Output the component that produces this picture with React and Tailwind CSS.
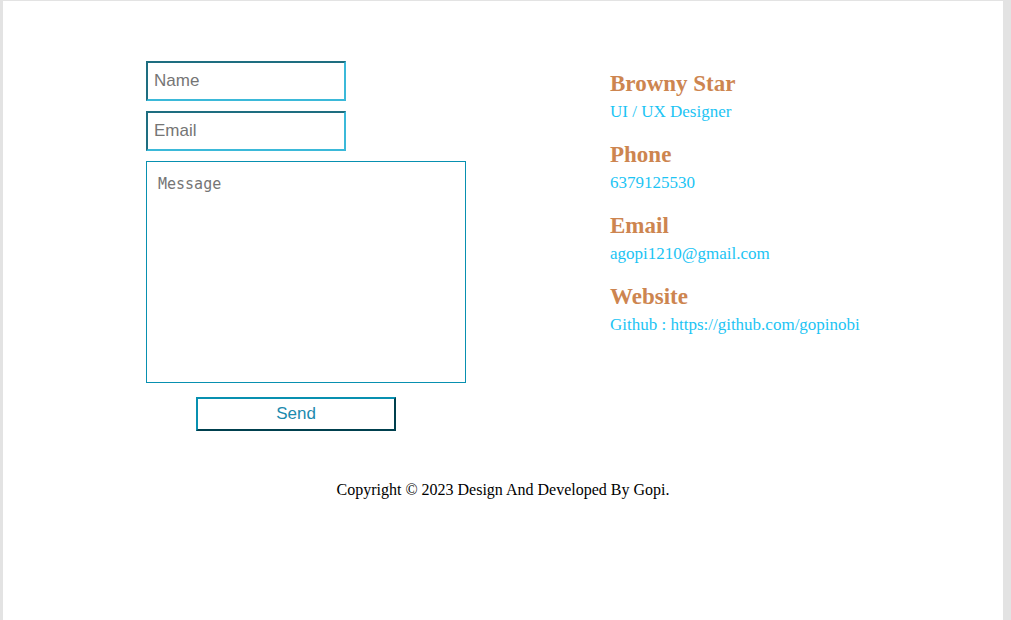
import React from "react";

const info = [
  { title: "Browny Star", text: "UI / UX Designer" },
  { title: "Phone", text: "6379125530" },
  { title: "Email", text: "agopi1210@gmail.com" },
  { title: "Website", text: "Github : https://github.com/gopinobi" },
];

export default function App() {
  return (
    <div className="h-[620px] w-[1011px] bg-white border-t border-l-[3px] border-r-[8px] border-b-0 border-[#e3e3e3] font-['Liberation_Serif',serif]">
      {/* Contact section */}
      <div className="flex pt-[60px]">
        <form className="ml-[143px] w-[320px] flex flex-col items-start">
          <input
            type="text"
            placeholder="Name"
            className="w-[200px] h-10 px-1.5 border-2 border-t-[#1e6e80] border-l-[#1e6e80] border-b-[#3bb9d9] border-r-[#3bb9d9] font-['Liberation_Sans',sans-serif] text-[17px] placeholder:text-[#757575] outline-none"
          />
          <input
            type="email"
            placeholder="Email"
            className="mt-2.5 w-[200px] h-10 px-1.5 border-2 border-t-[#1e6e80] border-l-[#1e6e80] border-b-[#3bb9d9] border-r-[#3bb9d9] font-['Liberation_Sans',sans-serif] text-[17px] placeholder:text-[#757575] outline-none"
          />
          <textarea
            placeholder="Message"
            className="mt-2.5 w-[320px] h-[222px] p-[11px] border border-[#0890b0] resize-none font-['DejaVu_Sans_Mono',monospace] text-[15px] placeholder:text-[#757575] outline-none"
          />
          <button
            type="button"
            className="mt-3.5 ml-[50px] w-[200px] h-[34px] border-2 border-t-[#0890b0] border-l-[#0890b0] border-b-[#00404e] border-r-[#00404e] bg-white font-['Liberation_Sans',sans-serif] text-[17px] text-[#1b8aae]"
          >
            Send
          </button>
        </form>

        <div className="ml-[144px] pt-[10px]">
          {info.map((item) => (
            <div key={item.title} className="mb-5">
              <h2 className="text-[23px] leading-[26px] font-bold text-[#cd8550]">{item.title}</h2>
              <p className="mt-[5px] text-[17px] leading-5 text-[#1cc4f4]">{item.text}</p>
            </div>
          ))}
        </div>
      </div>

      {/* Footer */}
      <p className="mt-[47px] text-center text-base text-black">
        Copyright © 2023 Design And Developed By Gopi.
      </p>
    </div>
  );
}
